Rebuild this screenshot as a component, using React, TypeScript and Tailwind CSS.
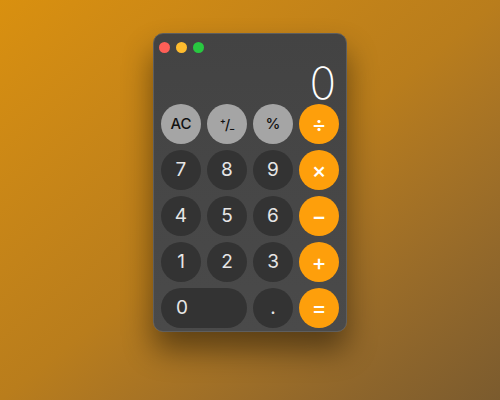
import React from "react";

type Kind = "fn" | "num" | "op";

const keys: { label: string; kind: Kind; wide?: boolean }[] = [
  { label: "AC", kind: "fn" },
  { label: "+/-", kind: "fn" },
  { label: "%", kind: "fn" },
  { label: "÷", kind: "op" },
  { label: "7", kind: "num" },
  { label: "8", kind: "num" },
  { label: "9", kind: "num" },
  { label: "×", kind: "op" },
  { label: "4", kind: "num" },
  { label: "5", kind: "num" },
  { label: "6", kind: "num" },
  { label: "−", kind: "op" },
  { label: "1", kind: "num" },
  { label: "2", kind: "num" },
  { label: "3", kind: "num" },
  { label: "+", kind: "op" },
  { label: "0", kind: "num", wide: true },
  { label: ".", kind: "num" },
  { label: "=", kind: "op" },
];

const styles: Record<Kind, string> = {
  fn: "bg-[#a5a5a5] text-[#111] text-[15px] font-medium",
  num: "bg-[#333333] text-[#e6e6e6] text-[19px]",
  op: "bg-[#fe9f0b] text-white text-[22px] font-medium",
};

function Key({ label, kind, wide }: { label: string; kind: Kind; wide?: boolean }) {
  if (wide) {
    return (
      <button
        className={`col-span-2 h-[40px] rounded-full flex items-center pl-[15px] ${styles[kind]}`}
      >
        {label}
      </button>
    );
  }
  return (
    <button
      className={`w-[40px] h-[40px] rounded-full flex items-center justify-center ${styles[kind]}`}
    >
      {label === "+/-" ? <span className="text-[14px] tracking-[-1px]">⁺/₋</span> : label}
    </button>
  );
}

export default function App() {
  return (
    <div
      className="w-[500px] h-[400px] overflow-hidden bg-linear-to-br from-[#d9900f] via-[#b97d1c] to-[#7b5b2e] flex justify-center pt-[33px]"
      style={{ fontFamily: "Inter, 'Noto Sans', sans-serif" }}
    >
      <div className="w-[194px] h-[299px] rounded-[10px] bg-linear-to-b from-[#434343] to-[#4a4a4a] border border-[#5e5e5e] shadow-[0_18px_30px_rgba(0,0,0,0.45)] flex flex-col">
        {/* Title bar */}
        <div className="flex gap-[6px] pl-[5px] pt-[8px]">
          <span className="w-[11px] h-[11px] rounded-full bg-[#fe5f57]" />
          <span className="w-[11px] h-[11px] rounded-full bg-[#febc2e]" />
          <span className="w-[11px] h-[11px] rounded-full bg-[#28c840]" />
        </div>

        {/* Display */}
        <div className="flex-1 flex items-end justify-end pr-[10px]">
          <span className="text-[44px] leading-[42px] font-extralight text-white">0</span>
        </div>

        {/* Keypad */}
        <div className="grid grid-cols-4 gap-[6px] px-[7px] pb-[3px]">
          {keys.map((k) => (
            <Key key={k.label} {...k} />
          ))}
        </div>
      </div>
    </div>
  );
}
